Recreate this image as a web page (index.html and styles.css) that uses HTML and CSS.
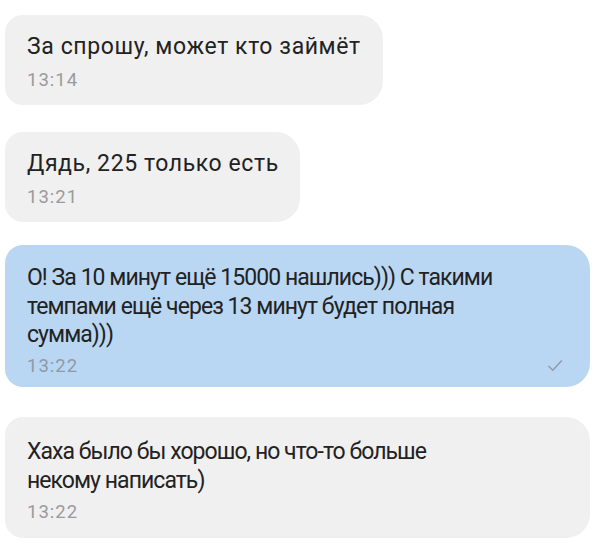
FILE: index.html
```html
<!DOCTYPE html>
<html lang="ru">
<head>
    <meta charset="UTF-8">
    <meta name="viewport" content="width=device-width, initial-scale=1.0">
    <title>Сообщения</title>
    <link rel="stylesheet" href="styles.css">
</head>
<body>
    <div class="chat">
        <div class="msg in first">
            <p class="text">За спрошу, может кто займёт</p>
            <div class="meta"><span class="time">13:14</span></div>
        </div>
        <div class="msg in second">
            <p class="text">Дядь, 225 только есть</p>
            <div class="meta"><span class="time">13:21</span></div>
        </div>
        <div class="msg out">
            <p class="text">О! За 10 минут ещё 15000 нашлись))) С такими<br>темпами ещё через 13 минут будет полная<br>сумма)))</p>
            <div class="meta">
                <span class="time">13:22</span>
                <svg class="check" width="16" height="13" viewBox="0 0 16 13">
                    <path d="M1.5 7 L5.8 11.3 L14.8 1.5" fill="none" stroke="#8d9cab" stroke-width="1.4"/>
                </svg>
            </div>
        </div>
        <div class="msg in last">
            <p class="text">Хаха было бы хорошо, но что-то больше<br>некому написать)</p>
            <div class="meta"><span class="time">13:22</span></div>
        </div>
    </div>
</body>
</html>
```

FILE: styles.css
```css
body {
    margin: 0;
    background-color: #fff;
    font-family: Roboto, "Liberation Sans", sans-serif;
    color: #222;
}
.chat {
    display: flex;
    flex-direction: column;
    align-items: flex-start;
    padding: 15px 5px 0 5px;
}
.msg {
    box-sizing: border-box;
    padding: 18px 22px 14px 22px;
    border-radius: 18px 24px 24px 18px;
    background-color: #f0f0f0;
}
.msg.first {
    width: 378px;
    height: 90px;
}
.msg.second {
    width: 295px;
    height: 90px;
    margin-top: 27px;
}
.msg.out {
    width: 585px;
    height: 142px;
    margin-top: 23px;
    padding-top: 19px;
    background-color: #b9d6f3;
}
.msg.last {
    width: 585px;
    height: 121px;
    margin-top: 30px;
    padding-top: 21px;
}
.text {
    margin: 0;
    font-size: 23px;
    line-height: 28.5px;
    letter-spacing: 0.6px;
    white-space: nowrap;
}
.out .text,
.last .text {
    letter-spacing: -0.95px;
}
.meta {
    display: flex;
    align-items: center;
    justify-content: space-between;
    margin-top: 5px;
}
.out .meta {
    margin-top: 3px;
}
.last .meta {
    margin-top: 4px;
}
.time {
    font-size: 18.5px;
    line-height: 26px;
    letter-spacing: 1px;
    color: #9a9a9a;
}
.out .time {
    color: #8e9aa6;
}
.check {
    margin-right: 5px;
}
```
